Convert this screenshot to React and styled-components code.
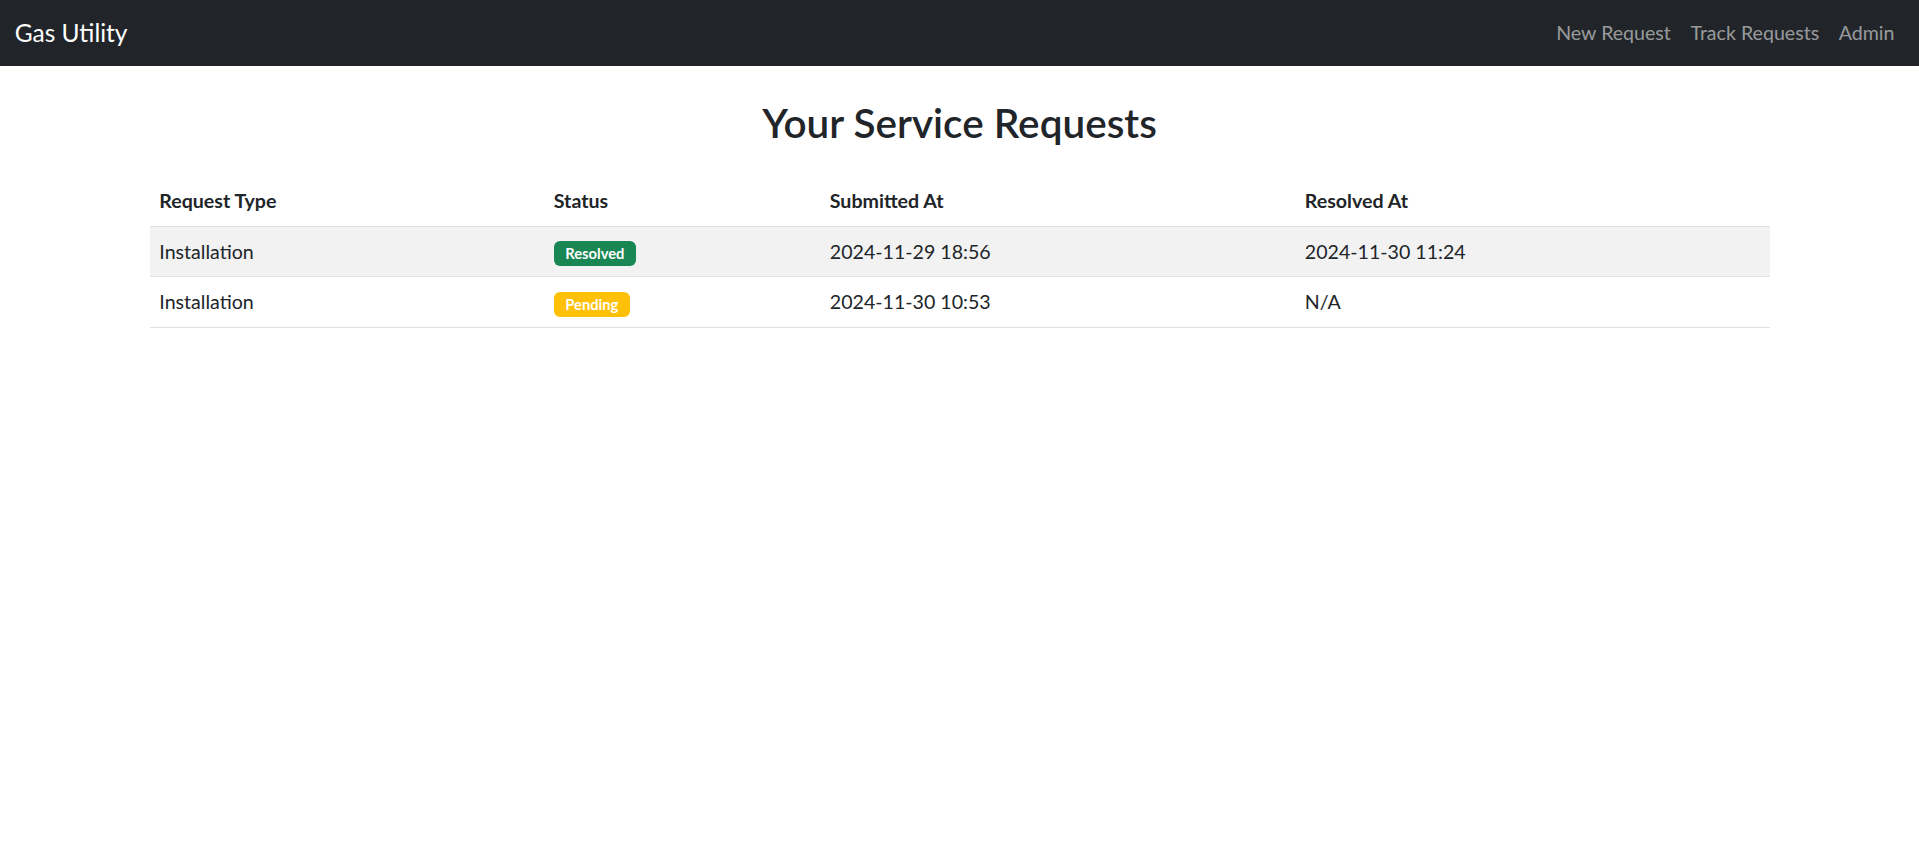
import React from "react";
import styled, { createGlobalStyle } from "styled-components";

const GlobalStyle = createGlobalStyle`
    html, body {
        margin: 0;
        padding: 0;
        background: #fff;
    }

    body {
        font-family: "Segoe UI", Lato, "Noto Sans", "Liberation Sans", sans-serif;
        font-size: 19.6px;
        line-height: 1.5;
        color: #212529;
    }

    * {
        box-sizing: border-box;
    }
`;

const Navbar = styled.nav`
    background-color: #212529;
    height: 66px;
    padding: 0 14.7px;
    display: flex;
    align-items: center;
    justify-content: space-between;
`;

const Brand = styled.a`
    color: #fff;
    font-size: 24.5px;
    text-decoration: none;
    line-height: 1.5;
`;

const NavLinks = styled.ul`
    display: flex;
    list-style: none;
    margin: 0;
    padding: 0;
`;

const NavLink = styled.a`
    display: block;
    padding: 9.8px;
    color: rgba(255, 255, 255, 0.55);
    text-decoration: none;

    &:hover {
        color: rgba(255, 255, 255, 0.75);
    }
`;

const Container = styled.main`
    width: 1620px;
    margin: 0 auto;
    padding-top: 33px;
`;

const Title = styled.h2`
    margin: 0 0 29px;
    text-align: center;
    font-size: 40.5px;
    font-weight: 600;
    line-height: 1.2;
`;

const Table = styled.table`
    width: 100%;
    border-collapse: collapse;
    table-layout: fixed;
`;

const HeadCell = styled.th`
    text-align: left;
    font-weight: 700;
    padding: 9.8px;
    border-bottom: 1px solid #dee2e6;
`;

const Row = styled.tr`
    background: ${(p) => (p.$striped ? "#f2f2f2" : "transparent")};
`;

const Cell = styled.td`
    padding: 10px 9.8px;
    border-bottom: 1px solid #dee2e6;
    vertical-align: middle;
`;

const Badge = styled.span`
    display: inline-block;
    padding: 5.2px 11.5px;
    font-size: 14.7px;
    font-weight: 700;
    line-height: 1;
    color: #fff;
    border-radius: 6px;
    background: ${(p) => (p.$status === "Resolved" ? "#198754" : "#ffc107")};
    vertical-align: middle;
`;

const columns = [
    { label: "Request Type", width: 394.5 },
    { label: "Status", width: 276 },
    { label: "Submitted At", width: 475 },
    { label: "Resolved At", width: 474.5 },
];

const requests = [
    {
        id: 1,
        type: "Installation",
        status: "Resolved",
        submitted: "2024-11-29 18:56",
        resolved: "2024-11-30 11:24",
    },
    {
        id: 2,
        type: "Installation",
        status: "Pending",
        submitted: "2024-11-30 10:53",
        resolved: null,
    },
];

const App = () => (
    <>
        <GlobalStyle />
        <Navbar>
            <Brand href="#">Gas Utility</Brand>
            <NavLinks>
                <li>
                    <NavLink href="#">New Request</NavLink>
                </li>
                <li>
                    <NavLink href="#">Track Requests</NavLink>
                </li>
                <li>
                    <NavLink href="#">Admin</NavLink>
                </li>
            </NavLinks>
        </Navbar>
        <Container>
            <Title>Your Service Requests</Title>
            <Table>
                <colgroup>
                    {columns.map((c) => (
                        <col key={c.label} style={{ width: c.width }} />
                    ))}
                </colgroup>
                <thead>
                    <tr>
                        {columns.map((c) => (
                            <HeadCell key={c.label}>{c.label}</HeadCell>
                        ))}
                    </tr>
                </thead>
                <tbody>
                    {requests.map((r, i) => (
                        <Row key={r.id} $striped={i % 2 === 0}>
                            <Cell>{r.type}</Cell>
                            <Cell>
                                <Badge $status={r.status}>{r.status}</Badge>
                            </Cell>
                            <Cell>{r.submitted}</Cell>
                            <Cell>{r.resolved || "N/A"}</Cell>
                        </Row>
                    ))}
                </tbody>
            </Table>
        </Container>
    </>
);

export default App;
